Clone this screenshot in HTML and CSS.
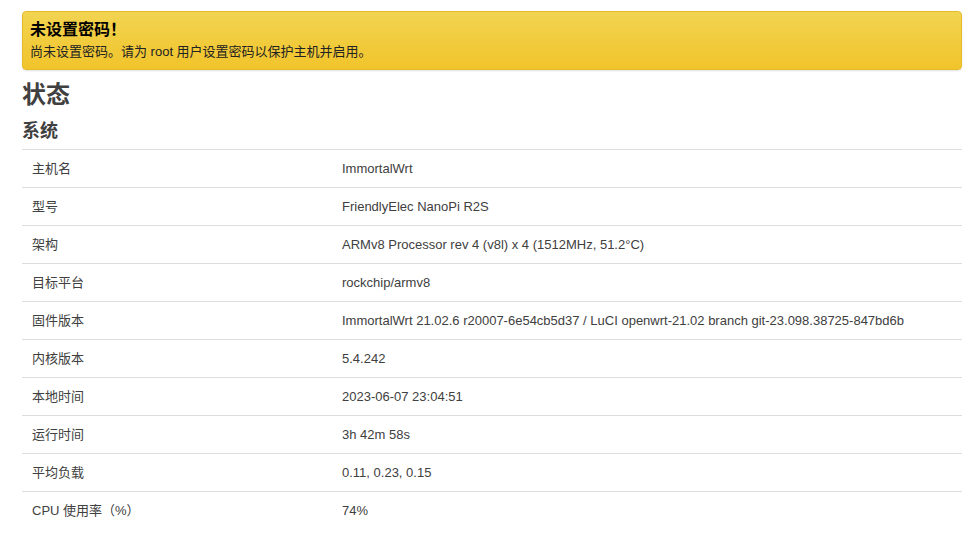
FILE: index.html
```html
<!DOCTYPE html>
<html lang="zh-CN">
<head>
<meta charset="utf-8">
<title>状态</title>
<link rel="stylesheet" href="styles.css">
</head>
<body>
<div class="page">
  <div class="alert">
    <div class="alert-title">未设置密码！</div>
    <div class="alert-text">尚未设置密码。请为 root 用户设置密码以保护主机并启用。</div>
  </div>
  <h2 class="page-title">状态</h2>
  <h3 class="section-title">系统</h3>
  <div class="table">
    <div class="row"><div class="key">主机名</div><div class="val">ImmortalWrt</div></div>
    <div class="row"><div class="key">型号</div><div class="val">FriendlyElec NanoPi R2S</div></div>
    <div class="row"><div class="key">架构</div><div class="val">ARMv8 Processor rev 4 (v8l) x 4 (1512MHz, 51.2°C)</div></div>
    <div class="row"><div class="key">目标平台</div><div class="val">rockchip/armv8</div></div>
    <div class="row"><div class="key">固件版本</div><div class="val">ImmortalWrt 21.02.6 r20007-6e54cb5d37 / LuCI openwrt-21.02 branch git-23.098.38725-847bd6b</div></div>
    <div class="row"><div class="key">内核版本</div><div class="val">5.4.242</div></div>
    <div class="row"><div class="key">本地时间</div><div class="val">2023-06-07 23:04:51</div></div>
    <div class="row"><div class="key">运行时间</div><div class="val">3h 42m 58s</div></div>
    <div class="row"><div class="key">平均负载</div><div class="val">0.11, 0.23, 0.15</div></div>
    <div class="row"><div class="key">CPU 使用率（%）</div><div class="val">74%</div></div>
  </div>
</div>
</body>
</html>
```

FILE: styles.css
```css
html, body {
  margin: 0;
  padding: 0;
  background: #fff;
}
body {
  font-family: "Liberation Sans", Arial, "Noto Sans CJK SC", sans-serif;
  color: #404040;
  font-size: 13px;
}
.page {
  padding: 11px 9px 0 22px;
}
.alert {
  border: 1px solid #e6bb2a;
  border-radius: 4px;
  background: linear-gradient(to bottom, #f2d451, #f1c42b);
  padding: 8px 7px 8px 7px;
  box-shadow: 0 1px 2px rgba(0,0,0,0.12);
  color: #111;
}
.alert-title {
  font-size: 16px;
  font-weight: bold;
  line-height: 20px;
  margin-bottom: 3px;
  color: #000;
}
.alert-text {
  font-size: 13px;
  line-height: 18px;
  color: #222;
}
.page-title {
  margin: 11px 0 0 0;
  font-size: 24px;
  line-height: 28px;
  font-weight: bold;
  color: #404040;
}
.section-title {
  margin: 11px 0 7px 0;
  font-size: 18px;
  line-height: 22px;
  font-weight: bold;
  color: #404040;
}
.table {
  display: flex;
  flex-direction: column;
}
.row {
  display: grid;
  grid-template-columns: 320px 1fr;
  border-top: 1px solid #dddddd;
  height: 37px;
  align-items: center;
  line-height: 18px;
}
.key {
  padding-left: 10px;
  color: #404040;
}
.val {
  color: #404040;
}
```
